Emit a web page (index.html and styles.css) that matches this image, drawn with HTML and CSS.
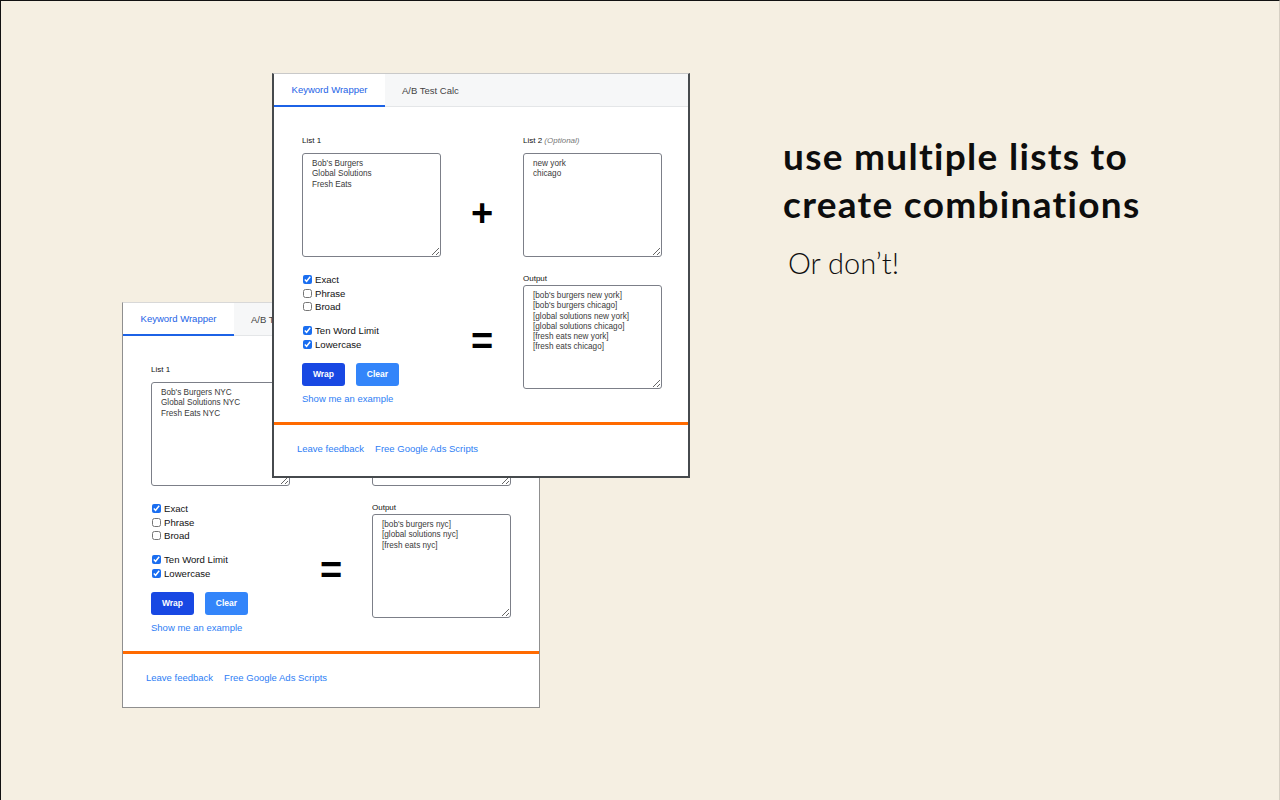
FILE: index.html
```html
<!DOCTYPE html>
<html lang="en">
<head>
    <meta charset="UTF-8">
    <meta name="viewport" content="width=device-width, initial-scale=1.0">
    <title>Keyword Wrapper</title>
    <link rel="stylesheet" href="styles.css">
</head>
<body>
    <main class="slide">
        <section class="screens">
            <!-- back screenshot: one list -->
            <div class="window window-back">
                <div class="tabs">
                    <div class="tab active">Keyword Wrapper</div>
                    <div class="tab">A/B Test Calc</div>
                </div>
                <div class="content">
                    <div class="field">
                        <label class="label">List 1</label>
                        <textarea class="box" readonly>Bob's Burgers NYC
Global Solutions NYC
Fresh Eats NYC</textarea>
                    </div>
                    <div class="sign sign-plus">+</div>
                    <div class="field">
                        <label class="label">List 2 <em>(Optional)</em></label>
                        <textarea class="box" readonly></textarea>
                    </div>

                    <div class="options">
                        <div class="checks">
                            <label class="check"><input type="checkbox" checked> Exact</label>
                            <label class="check"><input type="checkbox"> Phrase</label>
                            <label class="check"><input type="checkbox"> Broad</label>
                        </div>
                        <div class="checks">
                            <label class="check"><input type="checkbox" checked> Ten Word Limit</label>
                            <label class="check"><input type="checkbox" checked> Lowercase</label>
                        </div>
                        <div class="buttons">
                            <button class="btn btn-wrap">Wrap</button>
                            <button class="btn btn-clear">Clear</button>
                        </div>
                        <a class="link" href="#">Show me an example</a>
                    </div>
                    <div class="sign sign-equals">=</div>
                    <div class="field field-output">
                        <label class="label">Output</label>
                        <textarea class="box" readonly>[bob's burgers nyc]
[global solutions nyc]
[fresh eats nyc]</textarea>
                    </div>
                </div>
                <div class="footer">
                    <a class="link" href="#">Leave feedback</a>
                    <a class="link" href="#">Free Google Ads Scripts</a>
                </div>
            </div>

            <!-- front screenshot: two lists combined -->
            <div class="window window-front">
                <div class="tabs">
                    <div class="tab active">Keyword Wrapper</div>
                    <div class="tab">A/B Test Calc</div>
                </div>
                <div class="content">
                    <div class="field">
                        <label class="label">List 1</label>
                        <textarea class="box" readonly>Bob's Burgers
Global Solutions
Fresh Eats</textarea>
                    </div>
                    <div class="sign sign-plus">+</div>
                    <div class="field">
                        <label class="label">List 2 <em>(Optional)</em></label>
                        <textarea class="box" readonly>new york
chicago</textarea>
                    </div>

                    <div class="options">
                        <div class="checks">
                            <label class="check"><input type="checkbox" checked> Exact</label>
                            <label class="check"><input type="checkbox"> Phrase</label>
                            <label class="check"><input type="checkbox"> Broad</label>
                        </div>
                        <div class="checks">
                            <label class="check"><input type="checkbox" checked> Ten Word Limit</label>
                            <label class="check"><input type="checkbox" checked> Lowercase</label>
                        </div>
                        <div class="buttons">
                            <button class="btn btn-wrap">Wrap</button>
                            <button class="btn btn-clear">Clear</button>
                        </div>
                        <a class="link" href="#">Show me an example</a>
                    </div>
                    <div class="sign sign-equals">=</div>
                    <div class="field field-output">
                        <label class="label">Output</label>
                        <textarea class="box" readonly>[bob's burgers new york]
[bob's burgers chicago]
[global solutions new york]
[global solutions chicago]
[fresh eats new york]
[fresh eats chicago]</textarea>
                    </div>
                </div>
                <div class="footer">
                    <a class="link" href="#">Leave feedback</a>
                    <a class="link" href="#">Free Google Ads Scripts</a>
                </div>
            </div>
        </section>

        <section class="pitch">
            <h1>use multiple lists to<br>create combinations</h1>
            <p>Or don’t!</p>
        </section>
    </main>
</body>
</html>
```

FILE: styles.css
```css
* {
    box-sizing: border-box;
}
body {
    margin: 0;
    background-color: #f5efe2;
    font-family: "Liberation Sans", Arial, sans-serif;
}
.slide {
    display: flex;
    width: 1280px;
    height: 800px;
    border-top: 1px solid #111;
    border-left: 1px solid #111;
    border-right: 1px solid #d6d0c4;
}
.screens {
    position: relative;
    width: 782px;
    flex-shrink: 0;
}

/* the two app screenshots */
.window {
    position: absolute;
    width: 418px;
    background-color: white;
    display: flex;
    flex-direction: column;
}
.window-back {
    left: 121px;
    top: 301px;
    height: 406px;
    border: 1px solid #8f8f8f;
    border-top-color: #d8d8d8;
}
.window-front {
    left: 271px;
    top: 72px;
    height: 405px;
    border: 2px solid #464a4d;
    border-top: 1px solid #c9c9c9;
}
.tabs {
    display: flex;
    height: 33px;
    background-color: #f6f7f8;
    border-bottom: 1px solid #e4e6e8;
    font-size: 9.5px;
}
.tab {
    display: flex;
    align-items: center;
    padding: 0 17px;
    color: #444;
}
.tab.active {
    width: 111px;
    justify-content: center;
    padding: 0;
    background-color: white;
    color: #1c62e6;
    border-bottom: 2px solid #1c62e6;
    margin-bottom: -1px;
}
.content {
    display: grid;
    grid-template-columns: 139px 82px 139px;
    row-gap: 16px;
    padding: 28px 26px 17px 28px;
}
.field {
    display: flex;
    flex-direction: column;
}
.label {
    font-size: 8px;
    line-height: 12px;
    color: #111;
    margin-bottom: 6px;
}
.label em {
    color: #777;
}
.field-output .label {
    margin-bottom: 0;
}
.box {
    width: 139px;
    height: 104px;
    margin: 0;
    padding: 5px 9px;
    border: 1px solid #7c7f88;
    border-radius: 3px;
    font-family: "Liberation Sans", Arial, sans-serif;
    font-size: 8.2px;
    line-height: 10.3px;
    color: #3a3a3a;
    background-color: white;
    overflow: hidden;
}
.sign {
    display: flex;
    justify-content: center;
    align-items: center;
    font-weight: bold;
    font-size: 38px;
    line-height: 1;
    color: #000;
}
.sign-plus {
    padding-top: 34px;
}
.sign-equals {
    padding-top: 4px;
}
.options {
    display: flex;
    flex-direction: column;
}
.checks {
    display: flex;
    flex-direction: column;
    margin-bottom: 10.5px;
}
.check {
    display: flex;
    align-items: center;
    font-size: 9.6px;
    line-height: 13.5px;
    color: #111;
}
.check input {
    width: 9px;
    height: 9px;
    margin: 0 3px 0 1px;
    accent-color: #1a6ef0;
}
.buttons {
    display: flex;
    gap: 11px;
    margin-top: 1px;
}
.btn {
    width: 43px;
    height: 23px;
    border: none;
    border-radius: 3px;
    color: white;
    font-family: "Liberation Sans", Arial, sans-serif;
    font-weight: bold;
    font-size: 8.5px;
    cursor: pointer;
}
.btn-wrap {
    background-color: #1848e3;
}
.btn-clear {
    background-color: #3385fa;
}
.link {
    font-size: 9.5px;
    line-height: 12px;
    color: #2e7ef5;
    text-decoration: none;
}
.options .link {
    margin-top: 7px;
}
.footer {
    display: flex;
    gap: 11px;
    padding: 18px 23px;
    border-top: 3px solid #ff6a00;
}

/* slide copy */
.pitch {
    padding-top: 131px;
    color: #0d0d0d;
    font-family: Lato, "Open Sans", sans-serif;
}
.pitch h1 {
    margin: 0;
    font-size: 37px;
    line-height: 48px;
    font-weight: bold;
    letter-spacing: 1.3px;
}
.pitch p {
    margin: 18px 0 0 5px;
    font-size: 29px;
    line-height: 34px;
    font-weight: 300;
}
```
